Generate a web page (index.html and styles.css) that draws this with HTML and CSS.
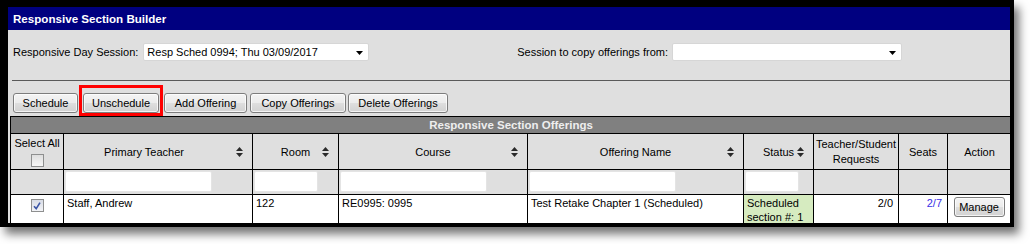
FILE: index.html
```html
<!DOCTYPE html>
<html lang="en">
<head>
<meta charset="utf-8">
<title>Responsive Section Builder</title>
<link rel="stylesheet" href="styles.css">
</head>
<body>
<div class="window">
  <div class="titlebar">Responsive Section Builder</div>
  <div class="session-row">
    <div class="field">
      <span class="label">Responsive Day Session:</span>
      <div class="select select-day">
        <span class="select-text">Resp Sched 0994; Thu 03/09/2017</span>
        <svg class="select-arrow" viewBox="0 0 7 4" width="7" height="4"><polygon points="0,0 7,0 3.5,4" fill="#000"/></svg>
      </div>
    </div>
    <div class="field field-right">
      <span class="label">Session to copy offerings from:</span>
      <div class="select select-copy">
        <span class="select-text"></span>
        <svg class="select-arrow" viewBox="0 0 7 4" width="7" height="4"><polygon points="0,0 7,0 3.5,4" fill="#000"/></svg>
      </div>
    </div>
  </div>
  <hr class="divider">
  <div class="toolbar">
    <button class="btn btn-schedule">Schedule</button>
    <div class="highlight"><button class="btn btn-unschedule">Unschedule</button></div>
    <button class="btn btn-add">Add Offering</button>
    <button class="btn btn-copy">Copy Offerings</button>
    <button class="btn btn-delete">Delete Offerings</button>
  </div>
  <table class="grid">
    <colgroup>
      <col class="c-sel"><col class="c-teacher"><col class="c-room"><col class="c-course"><col class="c-offer"><col class="c-status"><col class="c-req"><col class="c-seats"><col class="c-action">
    </colgroup>
    <tr class="row-caption"><th colspan="9" class="caption">Responsive Section Offerings</th></tr>
    <tr class="row-head">
      <th class="h-sel"><div class="sel-label">Select All</div><span class="checkbox"></span></th>
      <th><div class="sortable pad-teacher"><span class="h-text">Primary Teacher</span><svg class="sort" viewBox="0 0 7 10" width="7" height="10"><polygon points="0,4 3.5,0 7,4"/><polygon points="0,6 7,6 3.5,10"/></svg></div></th>
      <th><div class="sortable"><span class="h-text">Room</span><svg class="sort" viewBox="0 0 7 10" width="7" height="10"><polygon points="0,4 3.5,0 7,4"/><polygon points="0,6 7,6 3.5,10"/></svg></div></th>
      <th><div class="sortable"><span class="h-text">Course</span><svg class="sort" viewBox="0 0 7 10" width="7" height="10"><polygon points="0,4 3.5,0 7,4"/><polygon points="0,6 7,6 3.5,10"/></svg></div></th>
      <th><div class="sortable"><span class="h-text">Offering Name</span><svg class="sort" viewBox="0 0 7 10" width="7" height="10"><polygon points="0,4 3.5,0 7,4"/><polygon points="0,6 7,6 3.5,10"/></svg></div></th>
      <th><div class="sortable"><span class="h-text">Status</span><svg class="sort" viewBox="0 0 7 10" width="7" height="10"><polygon points="0,4 3.5,0 7,4"/><polygon points="0,6 7,6 3.5,10"/></svg></div></th>
      <th class="h-req">Teacher/Student<br>Requests</th>
      <th>Seats</th>
      <th>Action</th>
    </tr>
    <tr class="row-filter">
      <td></td>
      <td><input class="filter f-wide" type="text"></td>
      <td><input class="filter f-room" type="text"></td>
      <td><input class="filter f-wide" type="text"></td>
      <td><input class="filter f-wide" type="text"></td>
      <td><input class="filter f-status" type="text"></td>
      <td></td>
      <td></td>
      <td></td>
    </tr>
    <tr class="row-data">
      <td class="d-sel"><span class="checkbox checked"><svg viewBox="0 0 12 12" width="12" height="12"><path d="M3 6.2 L5.2 8.6 L9 2.6" fill="none" stroke="#3b55a6" stroke-width="1.6"/></svg></span></td>
      <td>Staff, Andrew</td>
      <td>122</td>
      <td>RE0995: 0995</td>
      <td>Test Retake Chapter 1 (Scheduled)</td>
      <td class="d-status">Scheduled<br>section #: 1</td>
      <td class="d-num">2/0</td>
      <td class="d-num"><a class="seats-link" href="#">2/7</a></td>
      <td class="d-action"><button class="btn btn-manage">Manage</button></td>
    </tr>
  </table>
</div>
</body>
</html>
```
FILE: styles.css
```css
html, body {
  margin: 0;
  padding: 0;
  background: #ffffff;
}

body {
  min-height: 244px;
}

.window {
  width: 1002px;
  height: 216px;
  border-style: solid;
  border-color: #000;
  border-width: 7px 4px 4px 8px;
  overflow: hidden;
  background: #dfdfdf;
  box-shadow: 5px 7px 9px rgba(0, 0, 0, 0.55);
  font-family: "Liberation Sans", Arial, sans-serif;
  font-size: 11px;
  color: #000;
}

.titlebar {
  height: 23px;
  line-height: 23px;
  background: #000080;
  color: #fff;
  font-weight: bold;
  font-size: 11.6px;
  padding-left: 5px;
}

.session-row {
  display: flex;
  align-items: center;
  height: 18px;
  padding: 13px 0 0 5px;
}

.field {
  display: flex;
  align-items: center;
  gap: 5px;
}

.field-right {
  margin-left: auto;
  margin-right: 108px;
  gap: 4px;
}

.select {
  display: flex;
  align-items: center;
  justify-content: space-between;
  box-sizing: border-box;
  height: 18px;
  background: #fff;
  border: 1px solid #d6d6d6;
  border-radius: 2px;
  padding: 0 5px 0 3px;
}

.select-day { width: 226px; }
.select-copy { width: 230px; }

.select-arrow { display: block; margin-top: 2px; }

.divider {
  margin: 19px 0 0 4px;
  border: 0;
  border-top: 1px solid #5a5a5a;
  height: 0;
}

.toolbar {
  display: flex;
  align-items: flex-start;
  height: 31px;
  margin-top: 4px;
  padding-left: 5px;
}

.btn {
  box-sizing: border-box;
  height: 20px;
  margin: 8px 0 0 0;
  padding: 0;
  font-family: "Liberation Sans", Arial, sans-serif;
  font-size: 11px;
  color: #000;
  border: 1px solid #7d7d7d;
  border-radius: 3px;
  background: linear-gradient(#f4f4f4 0%, #ececec 48%, #dedede 52%, #d2d2d2 100%);
  box-shadow: inset 0 0 0 1px rgba(255, 255, 255, 0.75);
}

.btn-schedule { width: 65px; margin-right: 1px; }
.btn-unschedule { width: 76px; margin-top: 0; }
.btn-add { width: 83px; margin-right: 3px; }
.btn-copy { width: 96px; margin-right: 2px; }
.btn-delete { width: 100px; }

.highlight {
  border: 3px solid #ff0000;
  padding: 5px 1px 0 1px;
  margin-right: 1px;
}

.grid {
  border-collapse: collapse;
  table-layout: fixed;
  width: 1001px;
  margin-left: 2px;
}

.c-sel { width: 53px; }
.c-teacher { width: 189px; }
.c-room { width: 86px; }
.c-course { width: 189px; }
.c-offer { width: 216px; }
.c-status { width: 70px; }
.c-req { width: 85px; }
.c-seats { width: 49px; }
.c-action { width: 64px; }

.grid th, .grid td {
  border: 1px solid #000;
  padding: 0;
  font-weight: normal;
}

.grid th.caption {
  height: 16px;
  background: #808080;
  color: #eeeeee;
  font-weight: bold;
  font-size: 11.5px;
  text-align: center;
}

.row-head th {
  height: 35px;
  background: #dfdfdf;
  text-align: center;
  vertical-align: middle;
}

.sortable {
  display: flex;
  align-items: center;
  padding: 0 9px 0 16px;
}

.sortable .h-text {
  flex: 1;
  text-align: center;
}

.pad-teacher { padding-left: 0; padding-right: 9px; }
.pad-teacher .h-text { padding-right: 12px; }

.sort { display: block; fill: #2a2a2a; }

.row-head th.h-sel { vertical-align: top; }
.sel-label { margin-top: 3px; line-height: 13px; }

.row-head th.h-req { line-height: 15px; padding: 0 1px; }

.checkbox {
  display: inline-block;
  box-sizing: border-box;
  width: 13px;
  height: 13px;
  margin-top: 4px;
  border: 1px solid #8e8f8f;
  background: linear-gradient(#dedede, #f6f6f6);
  vertical-align: top;
}

.checkbox.checked {
  margin-top: 0;
  background: linear-gradient(#d8dce6, #f3f4f7);
}

.checkbox.checked svg { display: block; margin: -0.5px; }

.row-filter td {
  height: 23px;
  background: #dfdfdf;
  vertical-align: top;
  padding: 1px 0 0 1px;
}

.filter {
  display: block;
  box-sizing: border-box;
  height: 21px;
  margin: 0;
  padding: 0 2px;
  border: 1px solid #e4e4e4;
  border-radius: 2px;
  background: #fff;
  font: inherit;
}

.f-wide { width: 147px; }
.f-room { width: 64px; }
.f-status { width: 54px; }

.row-data td {
  height: 34px;
  background: #fff;
  vertical-align: top;
  padding: 1px 3px 0 3px;
  line-height: 14px;
}

.row-data td.d-sel {
  text-align: center;
  padding-top: 4px;
}

.row-data td.d-status {
  background: #d6ebc0;
}

.row-data td.d-num {
  text-align: right;
  padding-right: 5px;
}

.seats-link {
  color: #3a2fe6;
  text-decoration: none;
}

.row-data td.d-action {
  text-align: center;
  padding: 2px 0 0 0;
}

.btn-manage {
  width: 51px;
  margin: 0 0 0 -1px;
}
```
